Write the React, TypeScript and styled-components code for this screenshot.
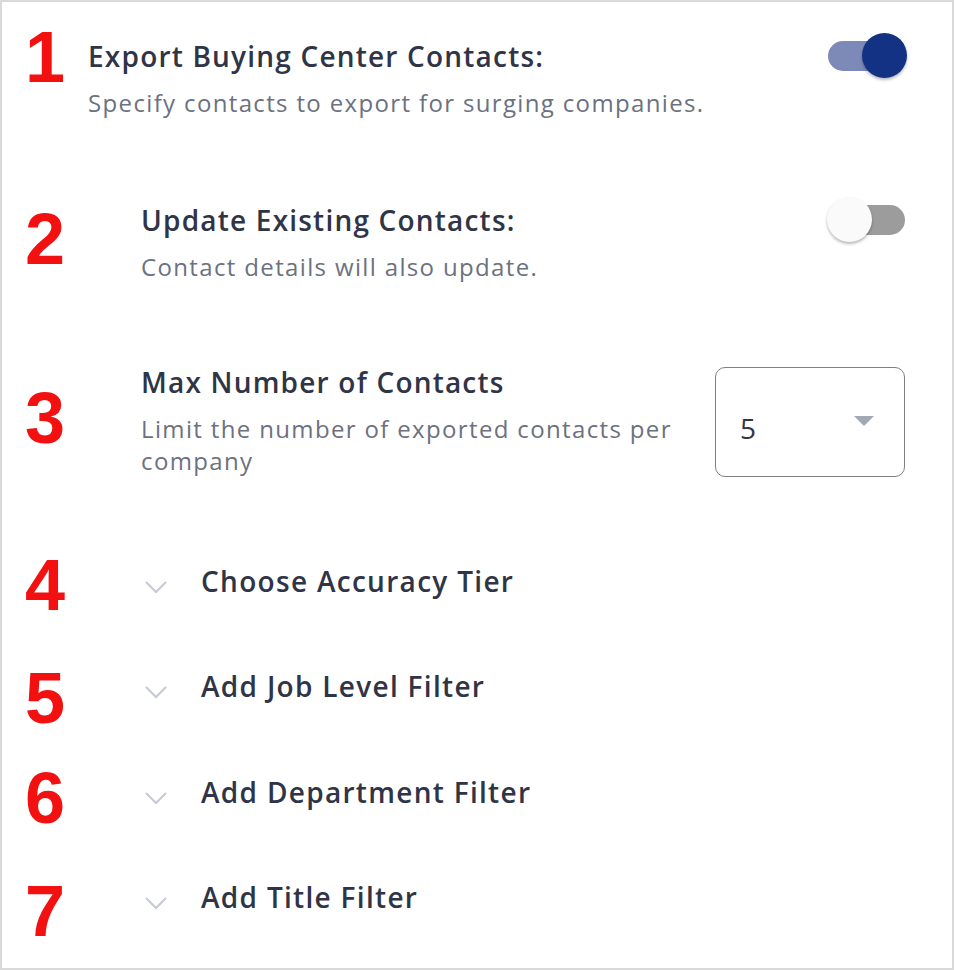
import React from "react";
import styled, { createGlobalStyle } from "styled-components";

const GlobalStyle = createGlobalStyle`
  html, body {
    margin: 0;
    padding: 0;
    background: #ffffff;
  }
  body {
    font-family: "Open Sans", Lato, sans-serif;
  }
`;

const Panel = styled.div`
  width: 954px;
  height: 970px;
  box-sizing: border-box;
  border: 2px solid #d9d9d9;
  background: #ffffff;
  padding: 0 45px 0 0;
  display: flex;
  flex-direction: column;
`;

const Row = styled.div<{ $top: number }>`
  display: flex;
  align-items: flex-start;
  margin-top: ${(p) => p.$top}px;
`;

const Num = styled.div<{ $shift: number }>`
  flex: 0 0 40px;
  height: 40px;
  margin-left: 23px;
  margin-right: 23px;
  margin-top: ${(p) => p.$shift}px;
  text-align: center;
  font-family: "Liberation Sans", Arial, sans-serif;
  font-weight: 700;
  font-size: 72px;
  line-height: 72px;
  color: #f21010;
`;

const Content = styled.div<{ $indent: number }>`
  flex: 1;
  display: flex;
  align-items: flex-start;
  padding-left: ${(p) => p.$indent}px;
`;

const TextBlock = styled.div`
  flex: 1;
  display: flex;
  flex-direction: column;
`;

const Title = styled.div`
  font-size: 28px;
  line-height: 40px;
  font-weight: 600;
  letter-spacing: 1.2px;
  color: #2f3446;
`;

const Sub = styled.div`
  margin-top: 11px;
  font-size: 24px;
  line-height: 32px;
  letter-spacing: 1.35px;
  color: #6c7180;
`;

const SwitchBox = styled.div`
  position: relative;
  width: 80px;
  height: 46px;
  margin-top: -3px;
  flex: 0 0 80px;
`;

const Track = styled.div<{ $on: boolean }>`
  position: absolute;
  left: 1px;
  right: 2px;
  top: 8px;
  height: 30px;
  border-radius: 15px;
  background: ${(p) => (p.$on ? "#7d8ab8" : "#9c9c9c")};
`;

const Knob = styled.div<{ $on: boolean }>`
  position: absolute;
  top: 0;
  left: ${(p) => (p.$on ? "35px" : "0")};
  width: 45px;
  height: 45px;
  border-radius: 50%;
  background: ${(p) => (p.$on ? "#143284" : "#fafafa")};
  box-shadow: 0 2px 3px rgba(0, 0, 0, 0.28);
`;

const Select = styled.div`
  flex: 0 0 190px;
  height: 110px;
  box-sizing: border-box;
  margin: 5px 2px 0 16px;
  border: 1.5px solid #808080;
  border-radius: 10px;
  display: flex;
  align-items: center;
  justify-content: space-between;
  padding: 0 30px 0 24px;
  font-size: 28px;
  color: #333745;
`;

const SelectValue = styled.span`
  margin-top: 12px;
`;

const Caret = styled.div`
  width: 0;
  height: 0;
  border-left: 10px solid transparent;
  border-right: 10px solid transparent;
  border-top: 10px solid #a4a8b4;
  margin-bottom: 2px;
`;

const Expander = styled.div`
  display: flex;
  align-items: center;
  height: 60px;
  gap: 32px;
`;

const Chevron = styled.svg`
  width: 26px;
  height: 16px;
  margin-top: 12px;
  flex: 0 0 26px;
`;

const ExpTitle = styled.div`
  font-size: 28px;
  line-height: 40px;
  font-weight: 600;
  letter-spacing: 1.3px;
  color: #2f3446;
`;

function Switch({ on }: { on: boolean }) {
  return (
    <SwitchBox>
      <Track $on={on} />
      <Knob $on={on} />
    </SwitchBox>
  );
}

const expanders = [
  { n: "4", label: "Choose Accuracy Tier", top: 74, shift: -2 },
  { n: "5", label: "Add Job Level Filter", top: 45, shift: 6 },
  { n: "6", label: "Add Department Filter", top: 46, shift: 0 },
  { n: "7", label: "Add Title Filter", top: 45, shift: 8 },
];

export default function App() {
  return (
    <>
      <GlobalStyle />
      <Panel>
        <Row $top={34}>
          <Num $shift={-15}>1</Num>
          <Content $indent={0}>
            <TextBlock>
              <Title>Export Buying Center Contacts:</Title>
              <Sub>Specify contacts to export for surging companies.</Sub>
            </TextBlock>
            <Switch on />
          </Content>
        </Row>
        <Row $top={81}>
          <Num $shift={3}>2</Num>
          <Content $indent={53}>
            <TextBlock>
              <Title>Update Existing Contacts:</Title>
              <Sub>Contact details will also update.</Sub>
            </TextBlock>
            <Switch on={false} />
          </Content>
        </Row>
        <Row $top={79}>
          <Num $shift={20}>3</Num>
          <Content $indent={53}>
            <TextBlock>
              <Title>Max Number of Contacts</Title>
              <Sub>Limit the number of exported contacts per company</Sub>
            </TextBlock>
            <Select>
              <SelectValue>5</SelectValue>
              <Caret />
            </Select>
          </Content>
        </Row>
        {expanders.map((e) => (
          <Row key={e.n} $top={e.top}>
            <Num $shift={e.shift}>{e.n}</Num>
            <Content $indent={55}>
              <Expander>
                <Chevron viewBox="0 0 26 16">
                  <polyline
                    points="3,3 13,13 23,3"
                    fill="none"
                    stroke="#c5c9d3"
                    strokeWidth="2"
                  />
                </Chevron>
                <ExpTitle>{e.label}</ExpTitle>
              </Expander>
            </Content>
          </Row>
        ))}
      </Panel>
    </>
  );
}
